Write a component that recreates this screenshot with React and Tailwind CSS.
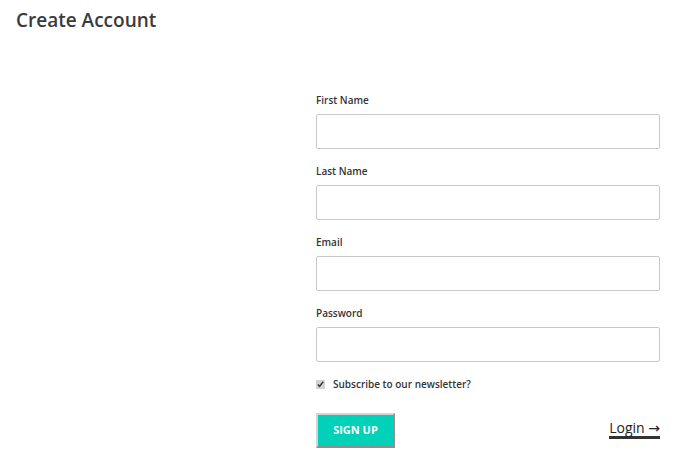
import React, { useState } from 'react'

const fields = [
  { id: 'first', label: 'First Name', type: 'text' },
  { id: 'last', label: 'Last Name', type: 'text' },
  { id: 'email', label: 'Email', type: 'email' },
  { id: 'password', label: 'Password', type: 'password' },
]

export default function App() {
  const [subscribe, setSubscribe] = useState(true)

  return (
    <div className="min-h-screen bg-white text-[#333]" style={{ fontFamily: '"Open Sans", sans-serif' }}>
      <h1 className="pl-4 pt-[8px] text-[19px] font-semibold leading-6 text-[#3b3b3b]">Create Account</h1>

      <form className="ml-[316px] mt-[61px] w-[344px]" onSubmit={(e) => e.preventDefault()}>
        {fields.map((f) => (
          <div key={f.id} className="mb-[15px]">
            <label htmlFor={f.id} className="block text-[10px] font-semibold leading-[14px] mb-[7px] text-[#333]">
              {f.label}
            </label>
            <input
              id={f.id}
              type={f.type}
              className="block h-[35px] w-full rounded-[2px] border border-[#c8c8c8] bg-white px-2 text-sm outline-none"
            />
          </div>
        ))}

        <label className="flex items-center gap-[8px] text-[10px] font-semibold text-[#333] mt-[1px]">
          <input
            type="checkbox"
            checked={subscribe}
            onChange={(e) => setSubscribe(e.target.checked)}
            className="h-[9px] w-[9px] accent-[#d4d4d4]"
          />
          Subscribe to our newsletter?
        </label>

        <div className="mt-[21px] flex items-center justify-between">
          <button
            type="submit"
            className="h-[35px] w-[79px] border-2 border-t-[#d4d4d4] border-l-[#d4d4d4] border-r-[#8f8f8f] border-b-[#8f8f8f] bg-[#00d1b8] text-[11px] font-bold text-white"
          >
            SIGN UP
          </button>
          <a href="#" className="-mt-[3px] border-b-[3px] border-[#333] text-[14px] leading-4 text-[#222]">
            Login <span style={{ fontFamily: '"DejaVu Sans", sans-serif' }}>→</span>
          </a>
        </div>
      </form>
    </div>
  )
}
